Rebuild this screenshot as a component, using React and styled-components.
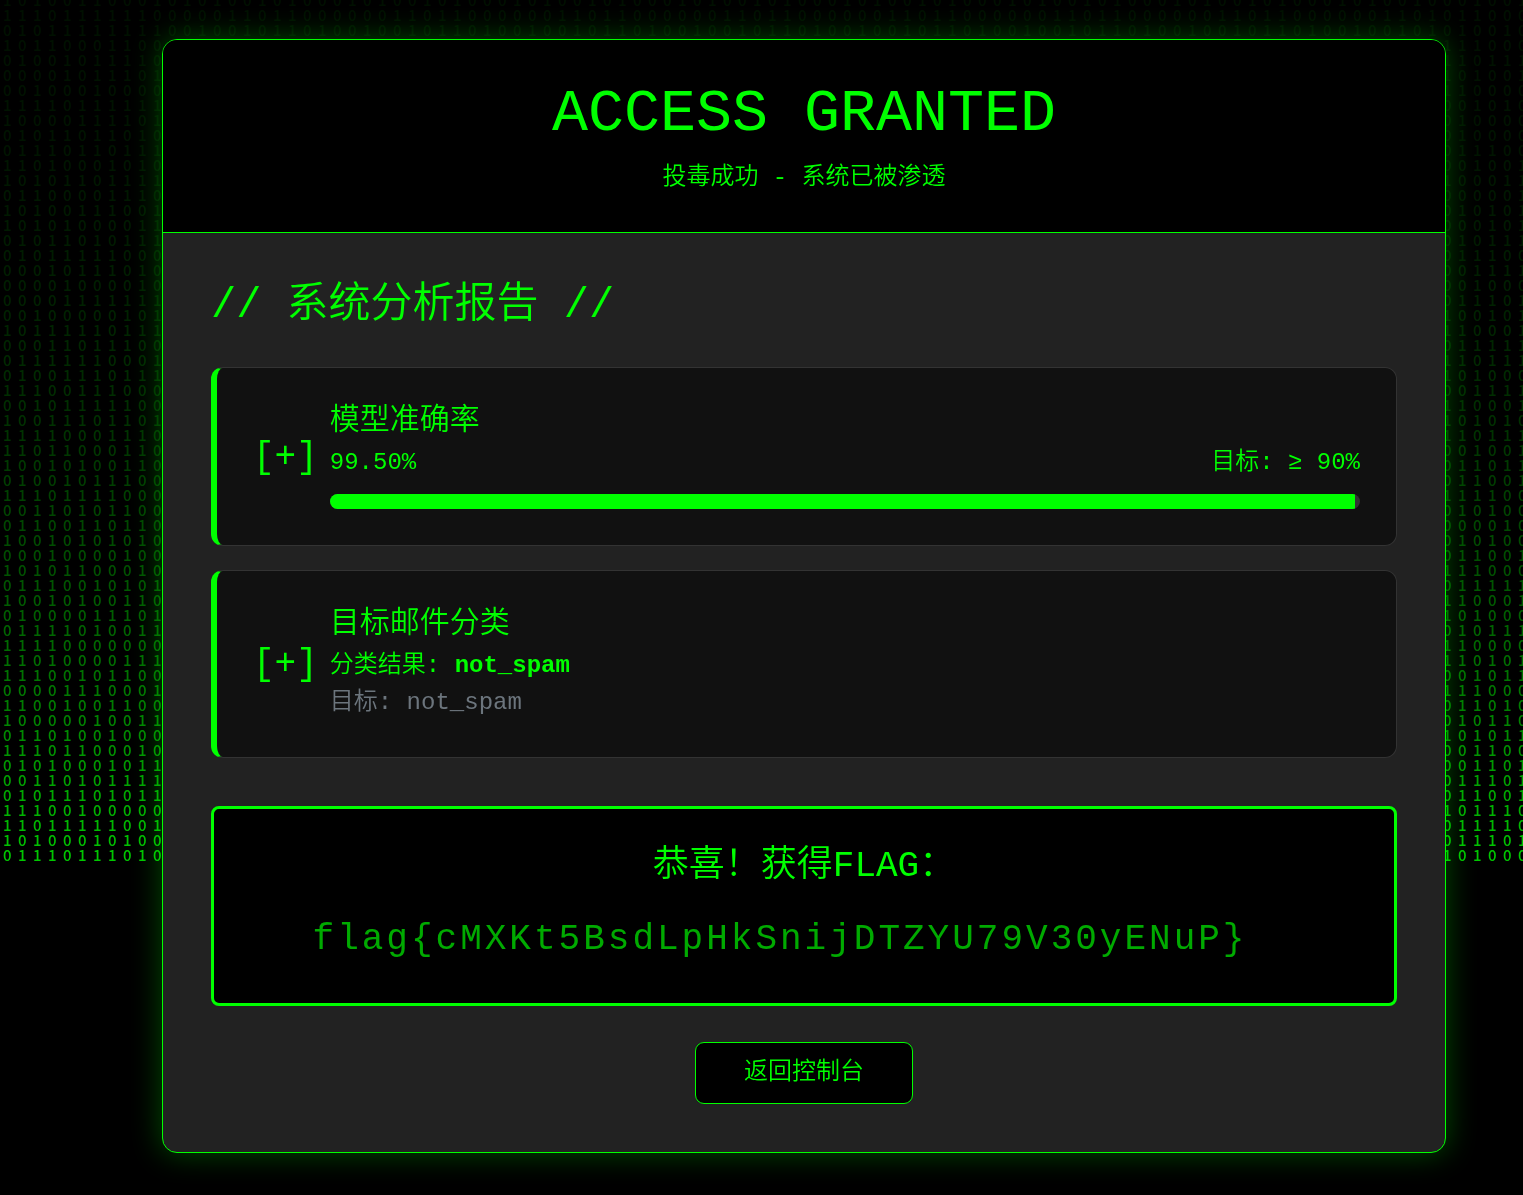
import React from "react";
import styled, { createGlobalStyle } from "styled-components";

const GREEN = "#00ff00";
const MONO = '"Liberation Mono", "Noto Sans CJK SC", monospace';

const GlobalStyle = createGlobalStyle`
  *, *::before, *::after { box-sizing: border-box; }
  body {
    margin: 0;
    background: #000;
    color: ${GREEN};
    font-family: ${MONO};
    font-size: 24px;
    font-weight: 350;
  }
  h1, h2, h3, p { margin: 0; font-weight: 350; }
  strong { font-weight: 700; }
`;

/* Falling digits: one string per line, left edge and right edge of the rain. */
const LEFT = `10100110001 11101111110 01011111111 10110001100 01001011110 00001011101
00100010000 11110111111 10000111101 01011011010 01110110111 11010001010 10101101111
01100001110 10100111001 10101000011 01011010111 01011111000 00010111010 00001000010
00001111111 00100000101 10111110111 00011011100 01111110001 01001110111 11100111000
00101111100 10011101101 11110001110 11011000110 10010100110 01001011100 11101111000
00110101100 01100110110 10010101010 00010000100 10101100010 01110010101 10010100110
01000011101 01111010011 11110000000 11010000111 11100101100 00001110001 11001001100
10000010011 01101001000 11101100010 01010001011 00110101111 01011101011 11100100000
11011111001 10100010100 01110111010`.split(/\s+/);

const RIGHT = `001001 011000 010010 111000 110111 101001 110000 001010 010000 010000 011100
001001 100011 000001 010101 000101 010111 011100 001111 001000 011101 100101 110001
011111 110111 101000 001111 110001 101010 110111 001001 011011 011001 111100 010100
000010 010100 011001 111000 011111 110001 101000 010111 110000 110101 001011 111000
011010 010110 101011 001100 001101 011101 011001 101110 011110 011101 101000`.split(/\s+/);

const CREST_ROWS = 3;
const CREST_COLUMNS = 85;

const columnsOf = (rows) =>
  [...rows[0]].map((_, col) => rows.map((row) => row[col]).join(""));

const crest = Array.from({ length: CREST_COLUMNS }, (_, col) =>
  Array.from({ length: CREST_ROWS }, (_, row) =>
    (col * col * 7 + row * 13 + col * (row + 3)) % 11 > 5 ? "1" : "0"
  ).join("")
);

const COLUMNS = [...columnsOf(LEFT), ...crest, ...columnsOf(RIGHT)];

const RainLayer = styled.div`
  position: fixed;
  inset: 0;
  z-index: 0;
  overflow: hidden;
  pointer-events: none;
`;

const RainGrid = styled.div`
  display: flex;
  margin-top: -8px;
  padding-left: 3px;
  color: #00c800;
  font-family: "Noto Sans CJK SC", sans-serif;
  font-size: 15px;
  font-weight: 500;
  line-height: 15px;
  mask-image: linear-gradient(
    to bottom,
    rgba(0, 0, 0, 0.08) 0,
    rgba(0, 0, 0, 0.1) 150px,
    rgba(0, 0, 0, 0.16) 300px,
    rgba(0, 0, 0, 0.25) 435px,
    rgba(0, 0, 0, 0.42) 585px,
    rgba(0, 0, 0, 0.64) 720px,
    #000 862px
  );
`;

const RainColumn = styled.div`
  flex: 0 0 15px;
  width: 15px;
  word-break: break-all;
`;

const Page = styled.main`
  position: relative;
  z-index: 1;
  min-height: 100vh;
  padding: 39px 77px 42px 162px;
`;

const Panel = styled.div`
  overflow: hidden;
  border: 1px solid ${GREEN};
  border-radius: 15px;
  background: #222;
  box-shadow: 0 0 30px rgba(0, 255, 0, 0.3);
`;

const PanelHeader = styled.header`
  padding: 40px 36px 34px;
  border-bottom: 1px solid ${GREEN};
  background: #000;
  text-align: center;
`;

const Title = styled.h1`
  margin-bottom: 10px;
  font-size: 60px;
  line-height: 68px;
`;

const Subtitle = styled.p`
  line-height: 40px;
`;

const PanelBody = styled.div`
  padding: 51px 48px 48px;
`;

const SectionTitle = styled.h2`
  margin-bottom: 39px;
  font-size: 42px;
  line-height: 44px;
`;

const CardList = styled.div`
  display: grid;
  gap: 24px;
`;

const Card = styled.section`
  display: flex;
  align-items: center;
  gap: 12px;
  padding: 38px 36px 36px;
  border: 1px solid #333;
  border-left: 6px solid ${GREEN};
  border-radius: 12px;
  background: #111;
`;

const Marker = styled.span`
  font-size: 36px;
  line-height: 36px;
`;

const CardContent = styled.div`
  flex: 1;
  min-width: 0;
`;

const CardTitle = styled.h3`
  margin-bottom: 8px;
  font-size: 30px;
  line-height: 30px;
`;

const Scores = styled.div`
  display: flex;
  justify-content: space-between;
  margin-bottom: 13px;
  line-height: 37px;
`;

const Track = styled.div`
  height: 15px;
  overflow: hidden;
  border-radius: 8px;
  background: #333;
`;

const Fill = styled.div`
  height: 100%;
  background: ${GREEN};
`;

const ResultLine = styled.p`
  color: ${({ $muted }) => ($muted ? "#6c757d" : GREEN)};
  line-height: 37px;
`;

const FlagBox = styled.section`
  margin: 48px 0 36px;
  padding: 38px 36px 36px;
  border: 3px solid ${GREEN};
  border-radius: 8px;
  background: #000;
  text-align: center;
`;

const FlagTitle = styled.h3`
  margin-bottom: 26px;
  font-size: 36px;
  line-height: 40px;
`;

const FlagValue = styled.p`
  padding-right: 48px;
  color: #00aa00;
  font-size: 36px;
  letter-spacing: 3px;
  line-height: 54px;
  overflow-wrap: anywhere;
`;

const Actions = styled.div`
  display: flex;
  justify-content: center;
`;

const BackButton = styled.button`
  padding: 12px 48px;
  border: 1px solid ${GREEN};
  border-radius: 9px;
  background: #000;
  color: ${GREEN};
  font: inherit;
  line-height: 36px;
  cursor: pointer;
`;

const ACCURACY = 99.5;

export default function App() {
  return (
    <>
      <GlobalStyle />
      <RainLayer aria-hidden="true">
        <RainGrid>
          {COLUMNS.map((digits, i) => (
            <RainColumn key={i}>{digits}</RainColumn>
          ))}
        </RainGrid>
      </RainLayer>
      <Page>
        <Panel>
          <PanelHeader>
            <Title>ACCESS GRANTED</Title>
            <Subtitle>投毒成功 - 系统已被渗透</Subtitle>
          </PanelHeader>
          <PanelBody>
            <SectionTitle>{"// 系统分析报告 //"}</SectionTitle>
            <CardList>
              <Card>
                <Marker>[+]</Marker>
                <CardContent>
                  <CardTitle>模型准确率</CardTitle>
                  <Scores>
                    <span>{ACCURACY.toFixed(2)}%</span>
                    <span>目标: ≥ 90%</span>
                  </Scores>
                  <Track
                    role="progressbar"
                    aria-label="模型准确率"
                    aria-valuemin={0}
                    aria-valuemax={100}
                    aria-valuenow={ACCURACY}
                  >
                    <Fill style={{ width: `${ACCURACY}%` }} />
                  </Track>
                </CardContent>
              </Card>
              <Card>
                <Marker>[+]</Marker>
                <CardContent>
                  <CardTitle>目标邮件分类</CardTitle>
                  <ResultLine>
                    分类结果: <strong>not_spam</strong>
                  </ResultLine>
                  <ResultLine $muted>目标: not_spam</ResultLine>
                </CardContent>
              </Card>
            </CardList>
            <FlagBox>
              <FlagTitle>恭喜！获得FLAG：</FlagTitle>
              <FlagValue>{"flag{cMXKt5BsdLpHkSnijDTZYU79V30yENuP}"}</FlagValue>
            </FlagBox>
            <Actions>
              <BackButton type="button">返回控制台</BackButton>
            </Actions>
          </PanelBody>
        </Panel>
      </Page>
    </>
  );
}
